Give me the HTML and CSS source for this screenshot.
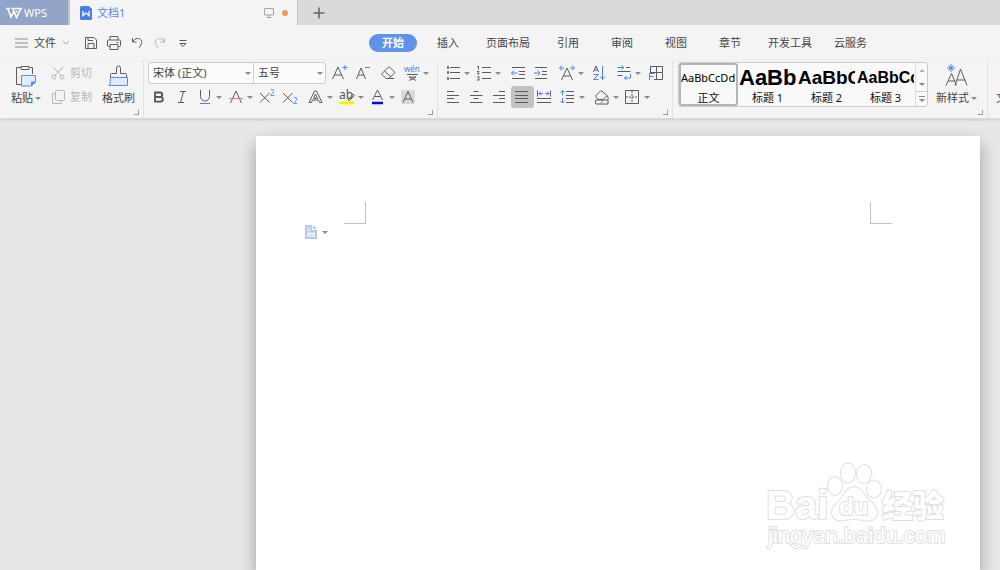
FILE: index.html
```html
<!DOCTYPE html>
<html lang="zh-CN">
<head>
    <meta charset="UTF-8">
    <meta name="viewport" content="width=device-width, initial-scale=1.0">
    <title>文档1 - WPS</title>
    <link rel="stylesheet" href="styles.css">
</head>
<body>
    <header class="title-bar">
        <button class="wps-button">
            <svg width="16" height="12" viewBox="0 0 16 12"><path d="M0 1.500h4M2 2l3 8 3-6M5.500 1.500h9.500l-4.500 9-3.500-8M9.500 4.500h2" fill="none" stroke="#fff" stroke-width="1.600"/></svg>
            <span>WPS</span>
        </button>
        <div class="doc-tab">
            <svg width="12" height="14" viewBox="0 0 12 14"><path d="M1.500 0H9l3 3v9.500a1.500 1.500 0 0 1-1.500 1.500h-9A1.500 1.500 0 0 1 0 12.500v-11A1.500 1.500 0 0 1 1.500 0z" fill="#4a80e4"/><path d="M3 5v4.500l3-2.500 3 2.500V5" fill="none" stroke="#fff" stroke-width="1.300"/></svg>
            <span class="doc-name">文档1</span>
            <svg class="monitor" width="12" height="12" viewBox="0 0 12 12"><path d="M1.500 1.500h9v6.500h-9zM6 8v2.500M3.500 10.500h5" fill="none" stroke="#a5a5a5"/></svg>
            <span class="unsaved-dot"></span>
        </div>
        <button class="new-tab" aria-label="新建">
            <svg width="12" height="12" viewBox="0 0 12 12"><path d="M6 .5v11M.5 6h11" stroke="#666" stroke-width="1.600"/></svg>
        </button>
    </header>

    <nav class="menu-bar">
        <div class="quick-tools">
            <button class="file-button">
                <svg width="13" height="10" viewBox="0 0 13 10"><path d="M0 1h13M0 5h13M0 9h13" stroke="#8d8d8d"/></svg>
                <span>文件</span>
                <svg width="8" height="6" viewBox="0 0 8 6"><path d="M1 1l3 3 3-3" fill="none" stroke="#a5a5a5"/></svg>
            </button>
            <button class="tool" aria-label="保存"><svg width="20" height="20" viewBox="0 0 20 20"><path d="M4.500 4.500h8.500l2.500 2.500v8.500h-11zM7 4.500v3h5M7 15.500v-5h6v5" class="ink"/></svg></button>
            <button class="tool" aria-label="打印"><svg width="20" height="20" viewBox="0 0 20 20"><path d="M6 7V3.500h8V7M6 13.500H4.500a1 1 0 0 1-1-1V8a1 1 0 0 1 1-1h11a1 1 0 0 1 1 1v4.500a1 1 0 0 1-1 1H14M6 11.500h8v5H6zM12.500 9.500h2" class="ink"/></svg></button>
            <button class="tool" aria-label="撤销"><svg width="20" height="20" viewBox="0 0 20 20"><path d="M5.500 5v4h4M5.500 9c2-3.500 5-4 7-3.200 3 1.500 3 5-.5 9" class="ink"/></svg></button>
            <button class="tool faded" aria-label="恢复"><svg width="20" height="20" viewBox="0 0 20 20"><path d="M14.500 5v4h-4M14.500 9c-2-3.500-5-4-7-3.200-3 1.500-3 5 .5 9" class="ink"/></svg></button>
            <button class="tool" aria-label="更多"><svg width="20" height="20" viewBox="0 0 20 20"><path d="M6.500 7.500h7M7 10.500h6l-3 3z" class="ink"/></svg></button>
        </div>
        <div class="menu-tabs">
            <button class="menu-tab active">开始</button>
            <button class="menu-tab">插入</button>
            <button class="menu-tab">页面布局</button>
            <button class="menu-tab">引用</button>
            <button class="menu-tab">审阅</button>
            <button class="menu-tab">视图</button>
            <button class="menu-tab">章节</button>
            <button class="menu-tab">开发工具</button>
            <button class="menu-tab">云服务</button>
        </div>
    </nav>

    <section class="ribbon">
        <div class="group clipboard">
            <button class="big-tool">
                <svg width="24" height="24" viewBox="0 0 24 24"><path d="M7 3.500H2.500v17H7M16 3.500h2.500V10M7 2.500h8v3H7z" class="ink"/><path d="M7.500 11.500h14V18l-4 4h-10z" fill="#e2ecfa" stroke="#5b8de6"/><path d="M21.500 18h-4v4" fill="#5b8de6" stroke="#5b8de6"/></svg>
                <span class="label">粘贴<i class="caret"></i></span>
            </button>
            <div class="stack">
                <button class="small-tool" disabled>
                    <svg width="14" height="14" viewBox="0 0 14 14"><path d="M2 1l8.500 9M12 1L3.500 10" class="ink"/><circle cx="3" cy="11" r="2" class="ink"/><circle cx="11" cy="11" r="2" class="ink"/></svg>
                    <span>剪切</span>
                </button>
                <button class="small-tool" disabled>
                    <svg width="14" height="14" viewBox="0 0 14 14"><rect x="4.500" y=".5" width="9" height="10" rx="1" class="ink"/><path d="M4.500 3.500h-3v10h9v-3" class="ink"/></svg>
                    <span>复制</span>
                </button>
            </div>
            <button class="big-tool">
                <svg width="24" height="24" viewBox="0 0 24 24"><path d="M3.500 13v-2.500a1 1 0 0 1 1-1h5V4a2 2 0 0 1 4 0v5.500h5a1 1 0 0 1 1 1V13" class="ink"/><path d="M3.500 13.500h17v8H2q1.500-2 1.500-8z" fill="#dfe9f9" stroke="#5b8de6"/></svg>
                <span class="label">格式刷</span>
            </button>
            <i class="launcher"></i>
        </div>

        <div class="group font">
            <div class="tool-row">
                <div class="combo">
                    <div class="select-wrap family"><select aria-label="字体"><option>宋体 (正文)</option></select><i class="caret"></i></div>
                    <div class="select-wrap size"><select aria-label="字号"><option>五号</option></select><i class="caret"></i></div>
                </div>
                <div class="cluster spaced">
                    <button class="tool" aria-label="增大字号"><svg width="20" height="20" viewBox="0 0 20 20"><path d="M2.500 16L8 4l5.500 12M4.500 12h7" class="ink"/><path d="M15 2v5M12.500 4.500h5" class="blue"/></svg></button>
                    <button class="tool" aria-label="减小字号"><svg width="20" height="20" viewBox="0 0 20 20"><path d="M2.500 16L7 5l4.500 11M4 12h6" class="ink"/><path d="M11 4.500h5" class="blue"/></svg></button>
                    <button class="tool" aria-label="清除格式"><svg width="20" height="20" viewBox="0 0 20 20"><path d="M3.500 11L10.500 4q.5-.5 1 0l5 5q.5.5 0 1L11 15.500H8zM6.500 8l6.500 6M8 15.500h8" class="ink"/></svg></button>
                    <button class="tool" aria-label="拼音指南"><svg width="20" height="20" viewBox="0 0 20 20"><text x="2" y="9" class="glyph-blue" font-size="8">wén</text><path d="M5 11.500h11M7 14h7M7 14l7 3.500M14 14l-7 3.500" class="ink"/></svg><i class="caret"></i></button>
                </div>
            </div>
            <div class="tool-row">
                <div class="cluster">
                    <button class="tool" aria-label="加粗"><svg width="20" height="20" viewBox="0 0 20 20"><path d="M6 5.500h5a2.200 2.200 0 0 1 0 4.500H6zM6 10h5.500a2.300 2.300 0 0 1 0 4.700H6z" fill="none" stroke="#555" stroke-width="1.800"/></svg></button>
                    <button class="tool" aria-label="倾斜"><svg width="20" height="20" viewBox="0 0 20 20"><path d="M8 4.500h6M6 15.500h6M11.500 4.500L8.500 15.500" class="ink"/></svg></button>
                    <button class="tool" aria-label="下划线"><svg width="20" height="20" viewBox="0 0 20 20"><path d="M5.500 3v6.500a4.500 4.500 0 0 0 9 0V3" class="ink"/><path d="M5 16.500h10" class="blue"/></svg><i class="caret"></i></button>
                    <button class="tool" aria-label="删除线"><svg width="20" height="20" viewBox="0 0 20 20"><path d="M4.500 16L10 4l5.500 12" class="ink"/><path d="M3 11.500h14" class="red"/></svg><i class="caret"></i></button>
                    <button class="tool" aria-label="上标"><svg width="20" height="20" viewBox="0 0 20 20"><path d="M3 6l9.500 9.500M12.500 6L3 15.500" class="ink"/><text x="13" y="9" class="glyph-blue" font-size="8">2</text></svg></button>
                    <button class="tool" aria-label="下标"><svg width="20" height="20" viewBox="0 0 20 20"><path d="M3 6l9.500 9.500M12.500 6L3 15.500" class="ink"/><text x="13" y="17" class="glyph-blue" font-size="8">2</text></svg></button>
                </div>
                <div class="cluster">
                    <button class="tool" aria-label="文字效果"><svg width="20" height="20" viewBox="0 0 20 20"><path d="M3 15.500L8.500 4h2L16 15.500h-2.500l-1-2.500h-6l-1 2.500zM9.500 7l-2 4.500h4z" class="ink"/></svg><i class="caret"></i></button>
                    <button class="tool" aria-label="突出显示"><svg width="20" height="20" viewBox="0 0 20 20"><text x="2" y="12" font-size="12" fill="#555">ab</text><path d="M11 13l5-6 1.500 1.500-5 5z" class="ink"/><path d="M4 16h12" stroke="#ffef00" stroke-width="3" stroke-linecap="round"/></svg><i class="caret"></i></button>
                    <button class="tool" aria-label="字体颜色"><svg width="20" height="20" viewBox="0 0 20 20"><path d="M4.500 13L9.500 3l5 10M6.500 9.500h6" class="ink"/><path d="M4 16h11" stroke="#0000f5" stroke-width="2.500"/></svg><i class="caret"></i></button>
                    <button class="tool" aria-label="字符底纹"><svg width="20" height="20" viewBox="0 0 20 20"><path d="M2 3h14v14H2z" fill="#d9d9d9"/><path d="M4 15.500L9 4.500l5 11M6 12h6" class="ink"/></svg></button>
                </div>
            </div>
            <i class="launcher"></i>
        </div>

        <div class="group paragraph">
            <div class="tool-row">
                <div class="cluster">
                    <button class="tool" aria-label="项目符号"><svg width="20" height="20" viewBox="0 0 20 20"><path d="M7 4.500h10M7 9.500h10M7 15.500h10" class="ink"/><path d="M4 4.500h2M4 9.500h2M4 15.500h2" stroke="#666" stroke-width="2.500"/></svg><i class="caret"></i></button>
                    <button class="tool" aria-label="编号"><svg width="20" height="20" viewBox="0 0 20 20"><path d="M8 4.500h9M8 9.500h9M8 15.500h9M3 3.500h1.500v3M3 8.500h2L3.500 11H5.500M3 14h2.500l-1 1.500 1 1.500H3" class="ink"/></svg><i class="caret"></i></button>
                </div>
                <div class="cluster">
                    <button class="tool" aria-label="减少缩进"><svg width="20" height="20" viewBox="0 0 20 20"><path d="M4 4.500h13M11 8.500h6M11 11.500h6M4 15.500h13" class="ink"/><path d="M3.500 10h6M6 7.500L3.500 10 6 12.500" class="blue"/></svg></button>
                    <button class="tool" aria-label="增加缩进"><svg width="20" height="20" viewBox="0 0 20 20"><path d="M4 4.500h12M11 8.500h5M11 11.500h5M4 15.500h12" class="ink"/><path d="M3 10h6M6.500 7.500L9 10l-2.500 2.500" class="blue"/></svg></button>
                </div>
                <div class="cluster">
                    <button class="tool" aria-label="中文版式"><svg width="20" height="20" viewBox="0 0 20 20"><path d="M4.500 17L10 5l5.500 12M6.500 13h7" class="ink"/><path d="M3 5h4M5 2.500L2.500 5 5 7.500M13 5h4M15 2.500L17.500 5 15 7.500" class="blue"/></svg><i class="caret"></i></button>
                    <button class="tool" aria-label="排序"><svg width="20" height="20" viewBox="0 0 20 20"><path d="M5.500 9L8 3l2.500 6M6.500 7h3" class="ink"/><path d="M5.500 11.500h5l-5 5h5M14.500 3v13M17 13.500l-2.500 3-2-3" class="blue"/></svg></button>
                </div>
                <div class="cluster">
                    <button class="tool" aria-label="显示段落标记"><svg width="20" height="20" viewBox="0 0 20 20"><path d="M12 4.500h4M3.500 8.500h13M3.500 12.500h5" class="ink"/><path d="M3.500 4.500h6M7.500 2.500l2 2-2 2M16.500 11v4h-6M12.500 13l-2 2 2 2" class="blue"/></svg><i class="caret"></i></button>
                    <button class="tool" aria-label="制表位"><svg width="20" height="20" viewBox="0 0 20 20"><path d="M5.500 9V3.500h12v13H9M11.500 3.500v13M5 9.500h12" class="ink"/><path d="M4.500 17v-6.500h5M4.500 13.500h4" class="blue"/></svg></button>
                </div>
            </div>
            <div class="tool-row">
                <div class="cluster">
                    <button class="tool" aria-label="左对齐"><svg width="20" height="20" viewBox="0 0 20 20"><path d="M4 4.500h7M4 8.500h12M4 11.500h7M4 15.500h12" class="ink"/></svg></button>
                    <button class="tool" aria-label="居中"><svg width="20" height="20" viewBox="0 0 20 20"><path d="M7.500 4.500h5M4 8.500h12.500M7.500 11.500h5M4 15.500h12.500" class="ink"/></svg></button>
                    <button class="tool" aria-label="右对齐"><svg width="20" height="20" viewBox="0 0 20 20"><path d="M10 4.500h6M4 8.500h12M10 11.500h6M4 15.500h12" class="ink"/></svg></button>
                    <button class="tool selected" aria-label="两端对齐"><svg width="20" height="20" viewBox="0 0 20 20"><path d="M3 4.500h13M3 8.500h13M3 11.500h13M3 15.500h13" class="ink"/></svg></button>
                    <button class="tool" aria-label="分散对齐"><svg width="20" height="20" viewBox="0 0 20 20"><path d="M2.500 3.500v6M15.500 3.500v6M2 11.500h14M2 15.500h14" class="ink"/><path d="M4 6.500h4M6 4.500l-2 2 2 2M10 6.500h4M12 4.500l2 2-2 2" class="blue"/></svg></button>
                    <button class="tool" aria-label="行距"><svg width="20" height="20" viewBox="0 0 20 20"><path d="M8 4.500h8M8 8.500h8M8 11.500h8M8 15.500h8" class="ink"/><path d="M4.500 4v4.500M2.500 5.500l2-2 2 2M4.500 11v4.500M2.500 14l2 2 2-2" class="blue"/></svg><i class="caret"></i></button>
                </div>
                <div class="cluster">
                    <button class="tool" aria-label="底纹颜色"><svg width="20" height="20" viewBox="0 0 20 20"><path d="M3.500 9L9 3.500l6 5-4 4H6zM15 8.500q2 2.500 1 4M4 13h12v4H4q-1.500-2 0-4z" class="ink"/><path d="M8 16.500l4-3.500" class="red"/></svg><i class="caret"></i></button>
                    <button class="tool" aria-label="边框"><svg width="20" height="20" viewBox="0 0 20 20"><path d="M2.500 3.500h13v13h-13z" class="ink"/><path d="M9 4v12M3 10h12" class="ink" stroke-dasharray="2 1"/></svg><i class="caret"></i></button>
                </div>
            </div>
            <i class="launcher"></i>
        </div>

        <div class="group styles">
            <div class="gallery">
                <button class="style-card chosen"><span class="preview body-text">AaBbCcDd</span><span>正文</span></button>
                <button class="style-card"><span class="preview heading-1">AaBb</span><span>标题 1</span></button>
                <button class="style-card"><span class="preview heading-2">AaBbC</span><span>标题 2</span></button>
                <button class="style-card"><span class="preview heading-3">AaBbCc</span><span>标题 3</span></button>
                <div class="gallery-scroll">
                    <button aria-label="上一行"><i class="caret up"></i></button>
                    <button aria-label="下一行"><i class="caret"></i></button>
                    <button class="expand" aria-label="展开"><i class="caret"></i></button>
                </div>
            </div>
            <button class="big-tool">
                <svg width="24" height="24" viewBox="0 0 24 24"><path d="M1 21.500l5.500-12 5 12M3.500 17h6.500M10 21.500L15.500 5l6.500 16.500M12 16h8.500" class="ink"/><path d="M6 0v8M2 4h8M3.500 1.500l5 5M8.500 1.500l-5 5" class="blue"/></svg>
                <span class="label">新样式<i class="caret"></i></span>
            </button>
            <i class="launcher"></i>
        </div>

        <div class="group more">
            <button class="big-tool"><span class="label">文档助手</span></button>
        </div>
    </section>

    <main class="workspace">
        <article class="page">
            <div class="margin-marks">
                <i class="mark left"></i>
                <i class="mark right"></i>
            </div>
            <button class="paste-options" aria-label="文档选项">
                <svg width="12" height="14" viewBox="0 0 12 14"><path d="M0 0h8l4 4v10H0z" fill="#b8caea"/><path d="M7.500 0v4.500H12M2 3h3M2 5.500h3M2 8h8M2.500 9.500h7v2h-7z" fill="none" stroke="#fff"/></svg>
                <i class="caret"></i>
            </button>
            <svg class="watermark" width="190" height="96" viewBox="0 0 190 96">
                <ellipse cx="71" cy="27" rx="7" ry="9"/>
                <ellipse cx="84" cy="14" rx="7" ry="9.500"/>
                <ellipse cx="100" cy="15" rx="7" ry="9" transform="rotate(12 100 15)"/>
                <ellipse cx="110" cy="30" rx="7" ry="8.500"/>
                <path d="M90 28q5 0 10 7l9 10q8 9 1 15-4 3-11 1-9-2-18 0-11 2-13-6-1-6 7-13l6-8q4-6 9-6z"/>
                <text x="2" y="60" font-size="40" font-weight="700">Bai</text>
                <text x="75" y="56" font-size="24" font-weight="700">du</text>
                <text x="118" y="58" font-size="31" font-weight="900">经验</text>
                <text x="4" y="84" font-size="22">jingyan.baidu.com</text>
            </svg>
        </article>
    </main>
</body>
</html>
```
FILE: styles.css
```css
* {
    box-sizing: border-box;
}
body {
    margin: 0;
    display: flex;
    flex-direction: column;
    min-height: 100vh;
    overflow: hidden;
    background: #e7e7e7;
    color: #444;
    font: 11px/16px "Noto Sans", "Noto Sans CJK SC", sans-serif;
}
button {
    margin: 0;
    padding: 0;
    border: none;
    background: none;
    color: inherit;
    font: inherit;
    white-space: nowrap;
}
svg {
    display: block;
    flex: none;
}
.ink {
    fill: none;
    stroke: #5c5c5c;
}
.blue {
    fill: none;
    stroke: #4a82e6;
}
.red {
    fill: none;
    stroke: #e87878;
}
.glyph-blue {
    fill: #4a82e6;
}
.caret {
    flex: none;
    border: 3px solid transparent;
    border-top-color: #8a8a8a;
    border-bottom: none;
}
.caret.up {
    border-top: none;
    border-bottom: 3px solid #b5b5b5;
}

/* Title bar */
.title-bar {
    display: flex;
    height: 25px;
    background: #d9dadc;
}
.wps-button {
    display: flex;
    align-items: center;
    gap: 2px;
    width: 68px;
    padding-left: 6px;
    background: #92a5c8;
    color: #fff;
}
.doc-tab {
    display: flex;
    align-items: center;
    width: 230px;
    padding: 0 9px 0 10px;
    border-left: 2px solid #c4c7cc;
    border-right: 1px solid #c4c4c4;
    background: #f4f4f4;
    color: #5288e6;
}
.doc-name {
    margin-left: 5px;
}
.monitor {
    margin-left: auto;
}
.unsaved-dot {
    width: 6px;
    height: 6px;
    margin-left: 7px;
    border-radius: 50%;
    background: #e8a050;
}
.new-tab {
    display: flex;
    align-items: center;
    justify-content: center;
    width: 42px;
}

/* Menu bar */
.menu-bar {
    display: flex;
    align-items: center;
    height: 36px;
    background: #f4f4f4;
}
.quick-tools {
    display: flex;
    align-items: center;
    flex: 0 0 369px;
    padding-left: 15px;
}
.file-button {
    display: flex;
    align-items: center;
    gap: 6px;
    margin-right: 10px;
}
.menu-tabs {
    display: flex;
}
.menu-tab {
    min-width: 54px;
    height: 18px;
    padding: 0 11px;
}
.menu-tab.active {
    min-width: 48px;
    margin-right: 4px;
    border-radius: 9px;
    background: #5f92ea;
    color: #fff;
    font-weight: 700;
}

/* Ribbon */
.ribbon {
    display: flex;
    height: 58px;
    overflow: hidden;
    border-bottom: 1px solid #d8d8d8;
    background: #f4f4f4;
    box-shadow: 0 1px 3px rgba(0, 0, 0, 0.12);
}
.group {
    position: relative;
    flex: none;
    border-right: 1px solid #e2e2e2;
}
.launcher {
    position: absolute;
    right: 4px;
    bottom: 3px;
    width: 5px;
    height: 5px;
    border-right: 1px solid #999;
    border-bottom: 1px solid #999;
}
.tool-row,
.cluster {
    display: flex;
}
.tool-row {
    height: 24px;
    gap: 3px;
}
.cluster.spaced {
    gap: 1px;
}
.tool {
    display: flex;
    align-items: center;
    min-width: 23px;
    height: 22px;
    padding: 0 1px;
}
.tool .caret {
    margin: 0 2px 0 1px;
}
.tool.selected {
    border-radius: 3px;
    background: #c2c2c2;
}
.faded {
    opacity: 0.4;
}
.big-tool {
    display: flex;
    flex-direction: column;
    align-items: center;
    gap: 2px;
}
.label {
    display: flex;
    align-items: center;
    gap: 2px;
}
.clipboard {
    display: flex;
    align-items: flex-start;
    width: 144px;
    gap: 10px;
    padding: 3px 0 0 11px;
}
.stack {
    display: flex;
    flex-direction: column;
    gap: 8px;
    padding-top: 1px;
}
.small-tool {
    display: flex;
    align-items: center;
    gap: 5px;
    color: #b8b8b8;
}
.small-tool .ink {
    stroke: #b8b8b8;
}
.font {
    width: 294px;
    padding: 1px 4px;
}
.combo {
    display: flex;
    width: 178px;
    height: 22px;
    border: 1px solid #ccc;
    border-radius: 3px;
    background: #fbfbfb;
}
.select-wrap {
    display: flex;
    align-items: center;
    padding-right: 2px;
}
.select-wrap select {
    flex: 1;
    min-width: 0;
    height: 20px;
    padding: 0 4px;
    border: none;
    background: none;
    color: inherit;
    font: inherit;
    appearance: none;
}
.family {
    width: 105px;
    border-right: 1px solid #ccc;
}
.size {
    flex: 1;
}
.paragraph {
    width: 235px;
    padding: 1px 4px;
}

/* Style gallery */
.styles {
    display: flex;
    align-items: flex-start;
    width: 315px;
    gap: 8px;
    padding: 1px 0 0 5px;
}
.styles .big-tool {
    padding-top: 2px;
}
.gallery {
    display: flex;
    width: 250px;
    height: 45px;
    border: 1px solid #ccc;
    border-radius: 3px;
    background: #f9f9f9;
    color: #111;
}
.style-card {
    width: 59px;
    padding: 0 1px;
    overflow: hidden;
}
.style-card.chosen {
    border: 2px solid #b5b5b5;
    border-radius: 3px;
    padding: 0;
}
.style-card span {
    display: block;
}
.preview {
    height: 27px;
    line-height: 30px;
    text-align: left;
    overflow: hidden;
    color: #000;
    font-family: "Liberation Sans", sans-serif;
    font-weight: 700;
}
.preview.body-text {
    height: 25px;
    line-height: 26px;
    font-family: "Noto Sans", sans-serif;
    font-weight: 400;
}
.heading-1 {
    font-size: 22px;
}
.heading-2 {
    font-size: 19px;
}
.heading-3 {
    font-size: 16px;
}
.gallery-scroll {
    display: flex;
    flex-direction: column;
    flex: 1;
    border-left: 1px solid #ddd;
}
.gallery-scroll button {
    display: flex;
    align-items: center;
    justify-content: center;
    flex: 1;
}
.gallery-scroll .expand {
    flex-direction: column;
    gap: 2px;
    border-top: 1px solid #ccc;
}
.expand::before {
    content: "";
    width: 6px;
    height: 1px;
    background: #8a8a8a;
}
.more {
    padding: 29px 0 0 8px;
}

/* Document */
.workspace {
    display: flex;
    flex: 1;
    padding: 17px 20px 0 256px;
}
.page {
    position: relative;
    flex: 1;
    padding: 66px 88px 0;
    background: #fff;
    box-shadow: 0 8px 16px rgba(0, 0, 0, 0.32);
}
.margin-marks {
    display: flex;
    justify-content: space-between;
}
.mark {
    width: 22px;
    height: 22px;
    border-bottom: 1px solid #c4c4c4;
}
.mark.left {
    border-right: 1px solid #c4c4c4;
}
.mark.right {
    border-left: 1px solid #c4c4c4;
}
.paste-options {
    display: flex;
    align-items: center;
    gap: 5px;
    margin: 1px 0 0 -39px;
}
.watermark {
    position: absolute;
    right: 26px;
    bottom: 15px;
    fill: #fff;
    stroke: #e0e0e0;
    stroke-width: 2px;
    paint-order: stroke;
    font-family: "Liberation Sans", "Noto Sans CJK SC", sans-serif;
}
```
